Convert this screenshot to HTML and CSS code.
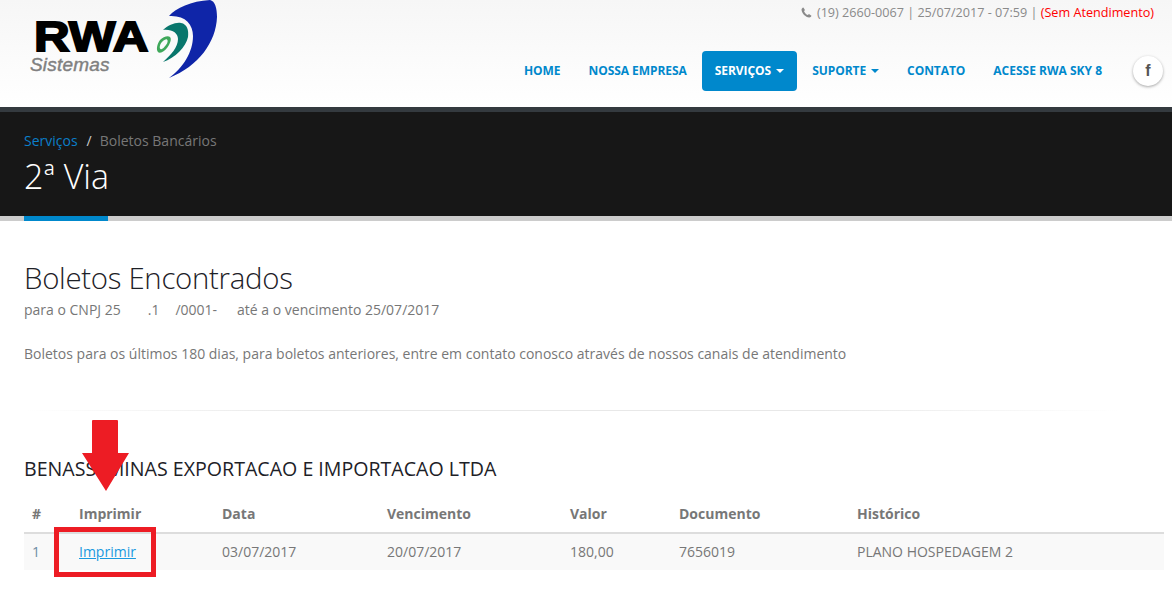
FILE: index.html
```html
<!DOCTYPE html>
<html lang="pt-BR">
<head>
<meta charset="utf-8">
<title>2ª Via</title>
<link rel="stylesheet" href="styles.css">
</head>
<body>
<header class="site-header">
  <a class="logo" href="#">
    <span class="logo-rwa">RWA</span>
    <span class="logo-sub">Sistemas</span>
    <svg class="logo-mark" viewBox="0 0 66 80" width="66" height="80" aria-hidden="true">
      <path fill="#0f25a8" d="M55 0C60 1 62 8 62 17C61 42 44 66 14 78C28 68 38 52 38 36C38 24 30 15 14 16C21 8 36 1 55 0Z"/>
      <path fill="#08766c" d="M8 30C13 25 21 22 26 23C32 24 34 30 33 37C31 47 20 58 8 62C16 55 23 47 23 39C23 33 17 29 8 30Z"/>
      <path fill="#3fa85a" fill-rule="evenodd" d="M5 40C8 37 13 35 15 37C17 39 15 44 12 48C9 52 4 54 3 52C1 50 2 44 5 40ZM7 42C5 44 4 48 5.500 49C7 50 9 47.500 11 45C13 42.500 13 40 12 39.500C11 39 9 40 7 42Z"/>
    </svg>
  </a>
  <div class="header-right">
    <p class="contact">
      <svg class="phone" viewBox="0 0 12 12" width="11" height="11" aria-hidden="true"><path fill="#8a8a8a" d="M2.600.6 4.300 3.300 3.300 4.500C3.900 6 5.600 7.900 7.400 8.700L8.700 7.700 11.400 9.500C11.100 10.700 10 11.500 8.900 11.400 4.800 10.900 1 7 .6 3.200.5 2 1.400.9 2.600.6Z"/></svg>
      (19) 2660-0067 | 25/07/2017 - 07:59 | <span class="closed">(Sem Atendimento)</span>
    </p>
    <nav class="main-nav">
      <a href="#">HOME</a>
      <a href="#">NOSSA EMPRESA</a>
      <a href="#" class="active caret">SERVIÇOS</a>
      <a href="#" class="caret">SUPORTE</a>
      <a href="#">CONTATO</a>
      <a href="#" class="sky">ACESSE RWA SKY 8</a>
      <span class="social">f</span>
    </nav>
  </div>
</header>

<section class="page-title">
  <p class="crumbs"><a href="#">Serviços</a><span class="sep">/</span><span>Boletos Bancários</span></p>
  <h1>2ª Via</h1>
</section>

<main class="content">
  <h2>Boletos Encontrados</h2>
  <p class="cnpj">para o CNPJ 25<span class="hide-a"></span>.1<span class="hide-b"></span>/0001-<span class="hide-c"></span>até a o vencimento 25/07/2017</p>
  <p class="note">Boletos para os últimos 180 dias, para boletos anteriores, entre em contato conosco através de nossos canais de atendimento</p>
  <hr class="divider">
  <h3>BENASSI MINAS EXPORTACAO E IMPORTACAO LTDA</h3>
  <table class="boletos">
    <colgroup>
      <col class="c1"><col class="c2"><col class="c3"><col class="c4"><col class="c5"><col class="c6"><col class="c7">
    </colgroup>
    <thead>
      <tr><th>#</th><th>Imprimir</th><th>Data</th><th>Vencimento</th><th>Valor</th><th>Documento</th><th>Histórico</th></tr>
    </thead>
    <tbody>
      <tr><td class="num">1</td><td><a href="#">Imprimir</a></td><td>03/07/2017</td><td>20/07/2017</td><td>180,00</td><td>7656019</td><td>PLANO HOSPEDAGEM 2</td></tr>
    </tbody>
  </table>
</main>

<svg class="arrow" viewBox="0 0 48 72" width="48" height="72" aria-hidden="true"><path fill="#ed1c24" d="M10 1Q10 0 11 0H35Q36 0 36 1V33H47L24 71 0 33H10Z"/></svg>
<div class="highlight"></div>
</body>
</html>
```
FILE: styles.css
```css
* { box-sizing: border-box; }
html, body { margin: 0; padding: 0; }
body {
  position: relative;
  height: 603px;
  overflow: hidden;
  background: #fff;
  color: #777;
  font: 14px/20px "Open Sans", sans-serif;
}
a { text-decoration: none; color: #0088cc; }
p { margin: 0; }

.site-header {
  height: 107px;
  display: flex;
  justify-content: space-between;
  background: linear-gradient(#f6f6f6, #fff);
}
.logo {
  position: relative;
  display: block;
  width: 240px;
  height: 107px;
}
.logo-rwa {
  position: absolute;
  left: 34px;
  top: 20px;
  font: 900 43px/32px "Liberation Sans", sans-serif;
  color: #000;
  -webkit-text-stroke: 1.800px #000;
  transform-origin: left center;
  transform: scaleX(1.150);
}
.logo-sub {
  position: absolute;
  left: 30px;
  top: 57px;
  font: italic 400 19px/16px "Liberation Sans", sans-serif;
  letter-spacing: 0.200px;
  color: #808080;
  -webkit-text-stroke: 0.400px #808080;
}
.logo-mark {
  position: absolute;
  left: 155px;
  top: 0;
}

.header-right {
  display: flex;
  flex-direction: column;
  align-items: flex-end;
  padding-right: 9px;
}
.contact {
  margin: 2px 9px 0 0;
  height: 20px;
  font-size: 12.640px;
  line-height: 20px;
  color: #8a8a8a;
  white-space: nowrap;
}
.phone { vertical-align: -1px; margin-right: 2px; }
.closed { color: #f00; }

.main-nav {
  margin-top: 29px;
  display: flex;
  align-items: center;
}
.main-nav a {
  display: flex;
  align-items: center;
  height: 40px;
  padding: 0 13px;
  margin-right: 2px;
  border-radius: 4px;
  font-size: 12px;
  font-weight: 700;
  letter-spacing: -0.060px;
  white-space: nowrap;
}
.main-nav a.sky { letter-spacing: 0; }
.main-nav a.active {
  background: #0088cc;
  color: #fff;
}
.main-nav a.caret::after {
  content: "";
  margin-left: 5px;
  border: 4px solid transparent;
  border-top-color: currentColor;
  border-bottom-width: 0;
}
.social {
  margin: 0 0 0 16px;
  width: 30px;
  height: 30px;
  border-radius: 50%;
  background: #fff;
  box-shadow: 0 1px 3px rgba(0, 0, 0, 0.35);
  display: flex;
  align-items: center;
  justify-content: center;
  color: #555;
  font: 700 16px/1 "Liberation Sans", sans-serif;
}

.page-title {
  position: relative;
  height: 114px;
  padding: 19px 24px 0;
  background: #171717;
  border-top: 5px solid #343a3f;
  border-bottom: 5px solid #ccc;
}
.page-title::after {
  content: "";
  position: absolute;
  left: 24px;
  bottom: -5px;
  width: 84px;
  height: 5px;
  background: #0088cc;
}
.crumbs { color: #777; font-size: 14px; line-height: 20px; }
.crumbs a { color: #0b7fc9; }
.sep { color: #ccc; margin: 0 8px 0 9px; }
.page-title h1 {
  margin: 3px 0 0;
  font-size: 34px;
  line-height: 44px;
  font-weight: 300;
  color: #fff;
}

.content { padding: 0 8px 0 24px; }
.content h2 {
  margin: 39px 0 0;
  font-size: 29.400px;
  line-height: 36px;
  font-weight: 300;
  color: #1d2127;
  letter-spacing: -0.300px;
}
.cnpj { margin-top: 3px; line-height: 22px; }
.hide-a { display: inline-block; width: 27px; }
.hide-b { display: inline-block; width: 16px; }
.hide-c { display: inline-block; width: 20px; }
.note { margin-top: 22px; line-height: 22px; }
.divider {
  border: 0;
  height: 1px;
  margin: 45px 0 0;
  background: linear-gradient(to right, transparent, #e8e8e8 25%, #e8e8e8 70%, transparent 96%);
}
.content h3 {
  margin: 46px 0 0;
  font-size: 19.600px;
  line-height: 24px;
  font-weight: 400;
  color: #1d2127;
}
.boletos {
  margin-top: 14px;
  width: 1140px;
  table-layout: fixed;
  border-collapse: collapse;
}
.c1 { width: 47px; }
.c2 { width: 143px; }
.c3 { width: 165px; }
.c4 { width: 183px; }
.c5 { width: 109px; }
.c6 { width: 178px; }
.c7 { width: 315px; }
.boletos th {
  height: 38px;
  padding: 0 8px;
  text-align: left;
  font-weight: 700;
  color: #777;
  border-bottom: 2px solid #ddd;
}
.boletos td {
  height: 37px;
  padding: 0 8px;
  background: #f9f9f9;
}
.boletos td a { color: #1a9ae0; text-decoration: underline; }
.boletos .num { color: #6f8ca3; }

.arrow {
  position: absolute;
  left: 82px;
  top: 420px;
}
.highlight {
  position: absolute;
  left: 54px;
  top: 527px;
  width: 102px;
  height: 50px;
  border: 5px solid #ed1c24;
}
```
